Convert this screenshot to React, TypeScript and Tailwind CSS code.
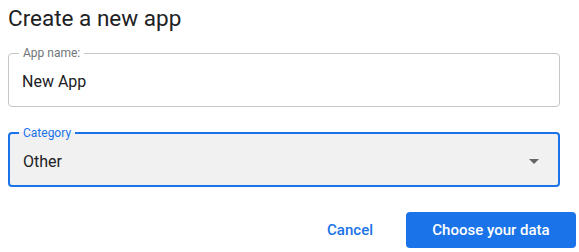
export default function App() {
  return (
    <div className="flex w-[579px] flex-col bg-white pl-2 pr-[3px] pt-1 font-['Roboto',sans-serif] text-[#202124]">
      <h1 className="text-[22.5px] leading-[28px] font-normal">Create a new app</h1>

      <fieldset className="mt-[15px] h-[60px] w-[552px] rounded border border-[#c6c6c6] px-[10px]">
        <legend className="px-1 text-[12px] leading-[12px] text-[#70757a]">App name:</legend>
        <div className="flex h-[47px] items-center pl-[3px] pb-[1px] text-[16px]">New App</div>
      </fieldset>

      <fieldset className="mt-[20px] h-[60px] w-[552px] rounded border-2 border-[#1a73e8] bg-[#f1f1f1] px-[9px]">
        <legend className="px-1 text-[12px] leading-[12px] text-[#1a73e8]">Category</legend>
        <div className="flex h-[46px] items-center justify-between pl-[4px] pr-[10px] pb-[1px] text-[16px]">
          <span>Other</span>
          <svg width="10" height="5" viewBox="0 0 10 5" className="fill-[#666666]">
            <path d="M0 0h10L5 5z" />
          </svg>
        </div>
      </fieldset>

      <div className="mt-[25px] flex items-center justify-end gap-[17px]">
        <button className="h-9 rounded px-4 text-[15px] font-medium text-[#1a73e8]">Cancel</button>
        <button className="h-9 w-[170px] rounded bg-[#1a73e8] text-[15px] font-medium text-white">
          Choose your data
        </button>
      </div>
    </div>
  );
}
